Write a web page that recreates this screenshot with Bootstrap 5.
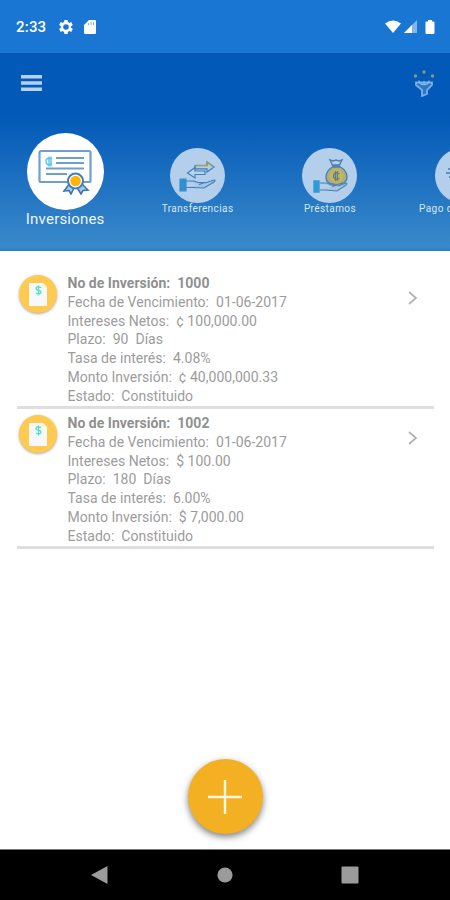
<!DOCTYPE html>
<html lang="es">
<head>
<meta charset="utf-8">
<meta name="viewport" content="width=device-width, initial-scale=1">
<title>Inversiones</title>
<link href="https://cdn.jsdelivr.net/npm/bootstrap@5.3.0/dist/css/bootstrap.min.css" rel="stylesheet">
<style>
body{font-family:Roboto,"Noto Sans",sans-serif;background:#fff;width:450px;height:900px}
svg{display:block;flex:none}
.status-bar{height:53px;background:#1976d2;padding:1px 14px 0 16px;font-size:15px;font-weight:500}
.status-time{width:42px;letter-spacing:.2px}
.hero{height:198px;background:linear-gradient(#0259b7 0,#0259b7 32%,#3989ca 98%,#2080c8 100%)}
.toolbar{height:60px;padding:0 15px 0 20px}
.tab-strip{margin-left:-1px}
.tab-item{flex:0 0 132.4px;color:#d9e7f5;font-size:10px;letter-spacing:.42px;line-height:12px;padding-top:35px}
.tab-item.active{color:#eef5fc;font-size:15px;letter-spacing:.2px;line-height:18px;padding-top:20px}
.disc{width:55px;height:55px;background:#b3cfec}
.active .disc{width:77px;height:77px;background:#fff}
.investments{padding:23px 16px 0 17px}
.investment{height:134.500px;border-bottom:3px solid #dedede;margin-bottom:5.600px;font-size:14px;line-height:18.8px;color:#9c9c9c;padding:0 15px 0 2px}
.doc-badge{width:38px;height:38px;background:#ffca50;box-shadow:0 1px 3px rgba(0,0,0,.35);margin-top:1px}
.doc-text{margin-left:10.5px;white-space:pre;letter-spacing:.02px}
.doc-title{font-weight:700;color:#909090}
.fab{width:75px;height:75px;background:#f2b022;box-shadow:0 3px 7px rgba(0,0,0,.5);margin-bottom:15px}
.nav-keys{height:51px;background:#000;border-top:1px solid #777;padding:0 91px}
</style>
<script src="https://cdn.jsdelivr.net/npm/bootstrap@5.3.0/dist/js/bootstrap.bundle.min.js"></script>
</head>
<body class="d-flex flex-column overflow-hidden">
<div class="status-bar d-flex align-items-center text-white flex-shrink-0">
  <span class="status-time">2:33</span>
  <svg width="16" height="16" viewBox="2 2 20 20" fill="#fff"><path d="M19.4 13c.1-.6.1-1.300 0-2l2.100-1.600-2-3.500-2.500 1a8 8 0 0 0-1.700-1L15 3.200h-4l-.4 2.700a8 8 0 0 0-1.700 1l-2.500-1-2 3.500L6.600 11c-.1.7-.1 1.400 0 2l-2.200 1.600 2 3.500 2.500-1a8 8 0 0 0 1.700 1l.4 2.700h4l.3-2.700a8 8 0 0 0 1.700-1l2.500 1 2-3.500zM13 15.500a3.500 3.500 0 1 1 0-7 3.500 3.500 0 0 1 0 7z" transform="translate(-1)"/></svg>
  <svg class="ms-2" width="16" height="16" viewBox="0 0 16 16"><path d="M7 1h6q1 0 1 1v12q0 1-1 1H3q-1 0-1-1V6z" fill="#fff"/><path d="M6.500 4v2.200M9 3v3M11.500 3v3" stroke="#1976d2" stroke-width=".8" opacity=".7"/></svg>
  <svg class="ms-auto" width="52" height="16" viewBox="0 0 52 16"><path d="M1 4.500Q9 -1.500 17 4.500L9 14z" fill="#fff"/><path d="M20 14 33 1v13z" fill="#84b5e8"/><path d="M20 14l8-8v8z" fill="#fff"/><path d="M41.500 3.500q0-1 1-1H44V1h4v1.500h1.500q1 0 1 1V14q0 1-1 1h-7q-1 0-1-1z" fill="#fff"/></svg>
</div>

<header class="hero flex-shrink-0 overflow-hidden">
  <div class="toolbar d-flex align-items-center justify-content-between">
    <svg width="22" height="18" viewBox="0 0 22 18" fill="#b7d0ee"><path d="M1 1h21v3.500H1zM1 7.200h21v3.500H1zM1 13.400h21v3.500H1z"/></svg>
    <svg width="22" height="28" viewBox="0 0 22 28" fill="none"><g fill="#839a83"><circle cx="2.500" cy="7" r="1.700"/><circle cx="11" cy="3" r="1.700"/><circle cx="19.500" cy="7" r="1.700"/></g><path d="M3 13.500h16v2.500l-5 5v4l-5 2v-6l-6-5z" fill="#2f76c6" stroke="#78afe5" stroke-width="1.800"/><path d="M6 11.500q0 3 3.500 4h3q3.500-1 3.500-4M11 12v3" stroke="#82b9ea" stroke-width="1.300"/></svg>
  </div>
  <nav class="tab-strip d-flex text-center text-nowrap">
    <div class="tab-item active d-flex flex-column align-items-center">
      <div class="disc rounded-circle d-flex align-items-center justify-content-center">
        <svg width="54" height="46" viewBox="0 0 54 46" fill="none"><rect x="1.500" y="2" width="51" height="31" rx="1.500" stroke="#6f9fd1" stroke-width="2.200"/><path d="M18 9h28M18 14h28M8 19.500h38M8 25h21" stroke="#6f9fd1" stroke-width="2"/><path d="M14 9.500q-6-1.500-6 3t6 3M11 7.500v10M13 7.500v10" stroke="#56c5e6" stroke-width="1.400"/><path d="M32 34l-6 8 5-.5 2 3.500 4-8M43 34l7 7-5 .5-2 3.500-5-8" fill="#a7c8e8" stroke="#3b77b5" stroke-width="1.600"/><circle cx="37.500" cy="32" r="7.500" fill="#fff" stroke="#427db9" stroke-width="2"/><circle cx="37.500" cy="32" r="5.300" fill="#ffb60c"/></svg>
      </div>
      <span>Inversiones</span>
    </div>
    <div class="tab-item d-flex flex-column align-items-center">
      <div class="disc rounded-circle d-flex align-items-center justify-content-center">
        <svg width="38" height="34" viewBox="0 0 38 34" fill="none" stroke="#427db9" stroke-width="1.200"><path d="M16 6.500h12V3l7 5-7 5V9.800H16z" fill="#b6cddd"/><path d="M17 6.500h11V3l6 4" stroke="#999f68" stroke-width="1.300"/><path d="M26 12H16V8.500L8.500 14l7.500 5v-3.500h10z" fill="#b9d3ee"/><path d="M7 22h8l4 1.500h7l-6 2M26 24l9-3q2 0 0 2l-10 6-12-.500H7" fill="#a4c4e5"/><path d="M1 20h6v12H1z" fill="#348fd0" stroke="#348fd0"/></svg>
      </div>
      <span>Transferencias</span>
    </div>
    <div class="tab-item d-flex flex-column align-items-center">
      <div class="disc rounded-circle d-flex align-items-center justify-content-center">
        <svg width="36" height="36" viewBox="0 0 36 36" fill="none" stroke="#4e80af" stroke-width="1.400"><path d="M18 2l3 1 3-1 3 1 3-1-2.500 5h-7zM20 8h8" fill="#b8cfe4"/><path d="M20.500 9Q14 13 14 19q0 6 6 7h8q7-1 7-7 0-6-6.500-10z" fill="#acad87"/><circle cx="24.500" cy="18" r="7.200" fill="#c6b759" stroke="#b7b16c"/><path d="M27.500 15.500q-6-2-6 2.500t6 2.500M23.500 13v10M25.500 13v10" stroke="#597e91" stroke-width="1.300"/><path d="M8 25h7l4 2h7l-6 1.500M26 28l8-3q2 0 0 2l-9 6-12-1H8" fill="#a4c4e5" stroke-width="1.100"/><path d="M2 23h5v11H2z" fill="#309bd8" stroke="#309bd8"/></svg>
      </div>
      <span>Préstamos</span>
    </div>
    <div class="tab-item d-flex flex-column align-items-center">
      <div class="disc rounded-circle d-flex align-items-center justify-content-center">
        <svg width="34" height="34" viewBox="0 0 34 34" fill="none" stroke="#427db9" stroke-width="1.300"><path d="M3 10h6L6 8M1 14h8M4 18h5"/><rect x="12" y="7" width="18" height="14"/></svg>
      </div>
      <span>Pago de Servicios</span>
    </div>
  </nav>
</header>

<main class="flex-grow-1 d-flex flex-column">
  <section class="investments">
    <article class="investment d-flex align-items-start">
      <div class="doc-badge rounded-circle d-flex align-items-center justify-content-center flex-shrink-0"><svg width="20" height="25" viewBox="0 0 20 25"><path d="M1 1h14l4 4v19H1z" fill="#f7f8fa"/><path d="M15 1l4 4h-4z" fill="#fff1c8"/><path d="M13 5.500Q8 3.700 8 6.500c0 2.500 5 1 5 3.500 0 2.300-3.500 2-5 1M10.500 3.500v10" fill="none" stroke="#55dfc4" stroke-width="1.300"/></svg></div>
      <div class="doc-text"><div class="doc-title">No de Inversión:  1000</div><div>Fecha de Vencimiento:  01-06-2017</div><div>Intereses Netos:  ¢ 100,000.00</div><div>Plazo:  90  Días</div><div>Tasa de interés:  4.08%</div><div>Monto Inversión:  ¢ 40,000,000.33</div><div>Estado:  Constituido</div></div>
      <svg class="ms-auto mt-3" width="12" height="16" viewBox="0 0 12 16" fill="none" stroke="#b2b2b2" stroke-width="1.700"><path d="M2 2l7 6L2 14"/></svg>
    </article>
    <article class="investment d-flex align-items-start">
      <div class="doc-badge rounded-circle d-flex align-items-center justify-content-center flex-shrink-0"><svg width="20" height="25" viewBox="0 0 20 25"><path d="M1 1h14l4 4v19H1z" fill="#f7f8fa"/><path d="M15 1l4 4h-4z" fill="#fff1c8"/><path d="M13 5.500Q8 3.700 8 6.500c0 2.500 5 1 5 3.500 0 2.300-3.500 2-5 1M10.500 3.500v10" fill="none" stroke="#55dfc4" stroke-width="1.300"/></svg></div>
      <div class="doc-text"><div class="doc-title">No de Inversión:  1002</div><div>Fecha de Vencimiento:  01-06-2017</div><div>Intereses Netos:  $ 100.00</div><div>Plazo:  180  Días</div><div>Tasa de interés:  6.00%</div><div>Monto Inversión:  $ 7,000.00</div><div>Estado:  Constituido</div></div>
      <svg class="ms-auto mt-3" width="12" height="16" viewBox="0 0 12 16" fill="none" stroke="#b2b2b2" stroke-width="1.700"><path d="M2 2l7 6L2 14"/></svg>
    </article>
  </section>
  <button class="fab btn border-0 rounded-circle p-0 mt-auto mx-auto d-flex align-items-center justify-content-center" aria-label="Agregar"><svg width="34" height="34" viewBox="0 0 34 34" stroke="#fff8df" stroke-width="2.400"><path d="M17 0v34M0 17h34"/></svg></button>
</main>

<footer class="nav-keys d-flex align-items-center justify-content-between flex-shrink-0">
  <svg width="17" height="20" viewBox="0 0 17 20" fill="#9b9b9b"><path d="M16.500 1v18L0 10z"/></svg>
  <svg width="16" height="16" viewBox="0 0 16 16" fill="#9b9b9b"><circle cx="8" cy="8" r="7.600"/></svg>
  <svg width="18" height="18" viewBox="0 0 18 18" fill="#9b9b9b"><rect x=".5" y=".5" width="17" height="17" rx="1"/></svg>
</footer>
</body>
</html>
